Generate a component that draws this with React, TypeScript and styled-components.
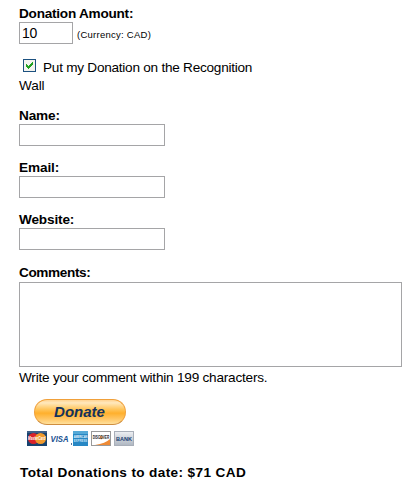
import React from "react";
import styled, { createGlobalStyle } from "styled-components";

const GlobalStyle = createGlobalStyle`
  body {
    margin: 0;
    background: #fff;
    color: #000;
    font-family: "Liberation Sans", Arial, sans-serif;
    font-size: 13.6px;
    line-height: 18px;
  }
  * { box-sizing: border-box; }
`;

const Form = styled.form`
  display: flex;
  flex-direction: column;
  align-items: flex-start;
  width: 417px;
  height: 485px;
  padding: 4px 0 0 19px;
  overflow: hidden;
`;

const Field = styled.div<{ $gap?: number }>`
  display: flex;
  flex-direction: column;
  align-items: flex-start;
  margin-bottom: ${(p) => p.$gap ?? 12}px;
`;

const Label = styled.label<{ $tracking: number; $line?: number }>`
  height: 18px;
  font-weight: bold;
  line-height: ${(p) => p.$line ?? 20}px;
  white-space: nowrap;
  letter-spacing: ${(p) => p.$tracking}px;
`;

const Input = styled.input<{ $width: number }>`
  display: block;
  width: ${(p) => p.$width}px;
  height: 22px;
  margin: 0;
  padding: 0 2px;
  border: 1px solid #a5a5a7;
  border-radius: 0;
  outline: none;
  background: #fff;
  color: #000;
  font: 14px "Liberation Sans", Arial, sans-serif;
  letter-spacing: -0.4px;
`;

const AmountRow = styled.div`
  display: flex;
  gap: 4px;
`;

const Currency = styled.span`
  padding-top: 4px;
  font-size: 9.5px;
  letter-spacing: 0.26px;
`;

const CheckRow = styled.label`
  display: block;
  height: 36px;
  margin-bottom: 12px;
  white-space: nowrap;
`;

const CheckLine = styled.span<{ $tracking: number }>`
  display: flex;
  height: 18px;
  line-height: 20px;
  letter-spacing: ${(p) => p.$tracking}px;
`;

const CheckIcon = styled.svg`
  display: block;
  flex: none;
  margin: 1px 7px 0 4px;
`;

const TextArea = styled.textarea`
  display: block;
  width: 383px;
  height: 85px;
  margin: 0;
  border: 1px solid #a5a5a7;
  border-radius: 0;
  outline: none;
  resize: none;
`;

const Hint = styled.div`
  height: 18px;
  margin-top: 2px;
  letter-spacing: -0.22px;
  white-space: nowrap;
`;

const DonateButton = styled.button`
  width: 92px;
  height: 26px;
  margin: 0 0 6px 15px;
  padding: 0 1px 0 0;
  border: 1px solid #f0a03a;
  border-bottom-color: #cf8e3f;
  border-radius: 13px;
  background: linear-gradient(#ffd391 0, #ffe8bd 12%, #ffc65e 38%, #ffb02d 55%, #ffc563 78%, #ffe09c 100%);
  color: #14325c;
  font: italic bold 15px/22px "Liberation Sans", Arial, sans-serif;
  letter-spacing: 0;
`;

const ButtonText = styled.span`
  display: block;
  height: 24px;
  line-height: 23px;
`;

const Cards = styled.div`
  display: flex;
  gap: 3px;
  height: 15px;
  margin: 0 0 17px 8px;
`;

const Card = styled.svg`
  display: block;
  overflow: visible;
  font-family: "Liberation Sans", Arial, sans-serif;
  font-weight: bold;
`;

const Total = styled.div`
  height: 18px;
  margin-left: 1px;
  font-weight: bold;
  line-height: 20px;
  letter-spacing: 0.37px;
  white-space: nowrap;
`;

export default function App() {
  return (
    <>
      <GlobalStyle />
      <Form onSubmit={(e) => e.preventDefault()}>
        <Field $gap={14}>
          <Label htmlFor="amount" $tracking={-0.24}>Donation Amount:</Label>
          <AmountRow>
            <Input id="amount" $width={54} defaultValue="10" />
            <Currency>(Currency: CAD)</Currency>
          </AmountRow>
        </Field>

        <CheckRow>
          <CheckLine $tracking={-0.25}>
            <CheckIcon width="13" height="13" viewBox="0 0 13 13" shapeRendering="crispEdges">
              <rect width="13" height="13" fill="#1c5180" />
              <rect x="1" y="1" width="11" height="11" fill="#f3f3ef" />
              <path d="M3 5h1v1h1v1h1v-1h1v-1h1v-1h1v-1h1v3h-1v1h-1v1h-1v1h-1v1h-1v-1h-1v-1h-1z" fill="#21a121" />
            </CheckIcon>
            Put my Donation on the Recognition
          </CheckLine>
          <CheckLine $tracking={-0.1}>Wall</CheckLine>
        </CheckRow>

        <Field>
          <Label htmlFor="name" $tracking={-0.15}>Name:</Label>
          <Input id="name" $width={146} />
        </Field>
        <Field>
          <Label htmlFor="email" $tracking={-0.1}>Email:</Label>
          <Input id="email" $width={146} />
        </Field>
        <Field $gap={14}>
          <Label htmlFor="website" $tracking={-0.15}>Website:</Label>
          <Input id="website" $width={146} />
        </Field>
        <Field $gap={12}>
          <Label htmlFor="comments" $tracking={-0.38} $line={18}>Comments:</Label>
          <TextArea id="comments" />
          <Hint>Write your comment within 199 characters.</Hint>
        </Field>

        <DonateButton type="submit">
          <ButtonText>Donate</ButtonText>
        </DonateButton>
        <Cards>
          <Card width="20" height="15" viewBox="0 0 20 15">
            <rect width="20" height="15" fill="#17436f" />
            <rect width="20" height="2" fill="#3f5f88" />
            <circle cx="6.5" cy="7.5" r="5.5" fill="#d9222b" />
            <circle cx="13.5" cy="7.5" r="5.5" fill="#f09a2d" />
            <text x="1" y="9.2" fontSize="4.5" fontStyle="italic" fill="#fff" textLength="17.5" lengthAdjust="spacingAndGlyphs">MasterCard</text>
          </Card>
          <Card width="20" height="15" viewBox="0 0 20 15">
            <text x="0.5" y="10.5" fontSize="8.5" fontStyle="italic" fill="#174f91" textLength="18" lengthAdjust="spacingAndGlyphs">VISA</text>
            <rect x="21" y="12" width="1" height="2" fill="#52749f" />
          </Card>
          <Card width="15" height="15" viewBox="0 0 15 15">
            <rect width="15" height="15" fill="#2787c4" />
            <rect width="15" height="3" fill="#55a9d7" />
            <text x="0.7" y="7" fontSize="3.6" fill="#eaf7ff" textLength="13.6" lengthAdjust="spacingAndGlyphs">AMERICAN</text>
            <text x="0.7" y="11.2" fontSize="3.6" fill="#c6e6f8" textLength="13.6" lengthAdjust="spacingAndGlyphs">EXPRESS</text>
          </Card>
          <Card width="20" height="15" viewBox="0 0 20 15">
            <rect x="0.5" y="0.5" width="19" height="14" fill="#fff" stroke="#999" />
            <path d="M4 14C11 13 16 11 19 8v6z" fill="#ee8a35" />
            <circle cx="10.2" cy="6.6" r="1.8" fill="#f0a467" />
            <text x="1.7" y="8.3" fontSize="4.6" fill="#242424" textLength="16.5" lengthAdjust="spacingAndGlyphs">DISCOVER</text>
          </Card>
          <Card width="20" height="15" viewBox="0 0 20 15">
            <defs>
              <linearGradient id="bank" x2="0" y2="1">
                <stop stopColor="#eef0f3" />
                <stop offset="1" stopColor="#aeb6c1" />
              </linearGradient>
            </defs>
            <rect x="0.5" y="0.5" width="19" height="14" fill="url(#bank)" stroke="#a9afb9" />
            <text x="2" y="9.6" fontSize="5.8" fill="#173e72" textLength="16" lengthAdjust="spacingAndGlyphs">BANK</text>
          </Card>
        </Cards>
        <Total>Total Donations to date: $71 CAD</Total>
      </Form>
    </>
  );
}
